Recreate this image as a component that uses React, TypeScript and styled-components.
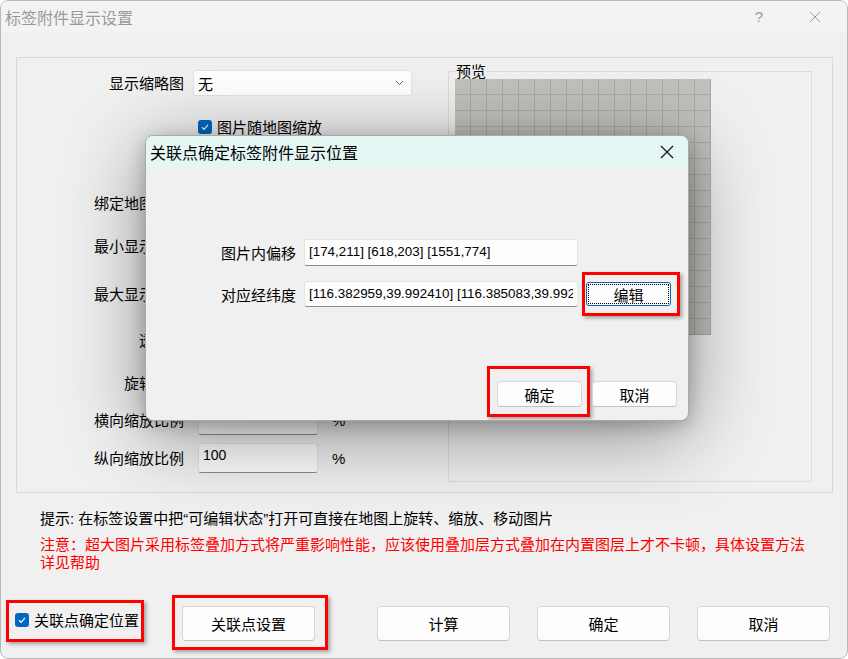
import React from 'react';
import styled, { createGlobalStyle } from 'styled-components';

const cjk = `'Noto Sans CJK SC', 'Noto Sans', sans-serif`;
const latin = `'Liberation Sans', 'Noto Sans CJK SC', sans-serif`;

const GlobalStyle = createGlobalStyle`
  html, body {
    margin: 0;
    padding: 0;
    background: #ffffff;
  }
  * {
    box-sizing: border-box;
  }
`;

const Window = styled.div`
  position: relative;
  width: 848px;
  height: 659px;
  display: flex;
  flex-direction: column;
  background: #f0f0f0;
  border: 1px solid #b9b9b9;
  border-radius: 8px;
  overflow: hidden;
  font-family: ${cjk};
  color: #000;
`;

const TitleBar = styled.div`
  height: 31px;
  display: flex;
  align-items: center;
  padding: 0 4px 0 4px;
  background: #f3f3f3;
`;

const Title = styled.div`
  flex: 1;
  font-size: 16px;
  color: #9a9a9a;
`;

const CaptionButton = styled.div`
  width: 56px;
  height: 31px;
  display: flex;
  align-items: center;
  justify-content: center;
  font-family: ${latin};
  font-size: 15px;
  color: #9a9a9a;
`;

const Frame = styled.div`
  margin: 25px 14px 0 15px;
  height: 436px;
  border: 1px solid #dadada;
  display: flex;
  padding: 4px 20px 10px 0;
`;

const FormColumn = styled.div`
  flex: 1;
  display: flex;
  flex-direction: column;
`;

const FormRow = styled.div<{ $gap: number }>`
  display: grid;
  grid-template-columns: 167px auto;
  column-gap: 9px;
  align-items: center;
  height: 30px;
  margin-top: ${p => p.$gap}px;
`;

const FieldLabel = styled.div`
  text-align: right;
  font-size: 15px;
  line-height: 20px;
  white-space: nowrap;
`;

const Controls = styled.div<{ $indent?: number }>`
  grid-column: 2;
  display: flex;
  align-items: center;
  padding-left: ${p => p.$indent ?? 0}px;
`;

const Combo = styled.div`
  width: 219px;
  height: 26px;
  display: flex;
  align-items: center;
  justify-content: space-between;
  padding: 0 7px 0 4px;
  background: #ffffff;
  border: 1px solid #e2e2e2;
  border-radius: 3px;
  font-size: 15px;
`;

const TextBox = styled.input<{ $w: number; $h: number; $size?: number; $lift?: number }>`
  width: ${p => p.$w}px;
  height: ${p => p.$h}px;
  margin: 0;
  padding: 0 4px ${p => p.$lift ?? 2}px;
  background: #fdfdfd;
  border: 1px solid #e4e4e4;
  border-bottom-color: #8c8c8c;
  border-radius: 3px;
  font-family: ${latin};
  font-size: ${p => p.$size ?? 14}px;
  color: #000;
  outline: none;
`;

const Unit = styled.span`
  margin-left: 14px;
  font-family: ${latin};
  font-size: 15px;
`;

const CheckItem = styled.label`
  display: inline-flex;
  align-items: center;
  gap: 5px;
  font-size: 15px;
  line-height: 20px;
  white-space: nowrap;
`;

const CheckBox = styled.span`
  width: 14px;
  height: 14px;
  display: inline-flex;
  align-items: center;
  justify-content: center;
  background: #0067c0;
  border-radius: 3px;
`;

const Preview = styled.fieldset`
  width: 364px;
  margin: 0;
  padding: 0 0 0 6px;
  border: 1px solid #dcdcdc;
  min-width: 0;
`;

const PreviewLegend = styled.legend`
  padding: 0 1px;
  font-size: 15px;
  line-height: 18px;
`;

const MapGrid = styled.div`
  width: 256px;
  height: 256px;
  margin-top: -1px;
  background-color: #c2c1bd;
  background-image: linear-gradient(to right, transparent 15px, #abaaa6 15px),
    linear-gradient(to bottom, transparent 15px, #abaaa6 15px);
  background-size: 16px 16px;
`;

const Notes = styled.div`
  margin-top: 17px;
  padding-left: 39px;
  font-size: 15px;
  line-height: 18px;
`;

const Hint = styled.div`
  font-family: ${latin};
`;

const Warning = styled.div`
  width: 772px;
  margin-top: 7px;
  color: #ff0000;
`;

const Footer = styled.div`
  margin-top: 35px;
  height: 35px;
  display: flex;
  align-items: center;
  padding: 0 17px 0 14px;
`;

const ButtonGroup = styled.div`
  margin-left: auto;
  display: flex;
  gap: 27px;
`;

const Button = styled.button<{ $w: number; $h: number; $focused?: boolean }>`
  position: relative;
  width: ${p => p.$w}px;
  height: ${p => p.$h}px;
  margin: 0;
  padding: 0;
  background: #fdfdfd;
  border: 1px solid ${p => (p.$focused ? '#0067c0' : '#d6d6d6')};
  border-bottom-color: ${p => (p.$focused ? '#0067c0' : '#c2c2c2')};
  border-radius: ${p => (p.$focused ? 3 : 4)}px;
  font-family: ${cjk};
  font-size: 15px;
  color: #000;
  &::before {
    content: '';
    display: ${p => (p.$focused ? 'block' : 'none')};
    position: absolute;
    inset: 1px;
    border: 1px dotted #000;
  }
`;

/* red annotation frame drawn around a control */
const Marked = styled.div<{ $inset: string; $lift?: number; $offset?: number }>`
  position: relative;
  display: inline-flex;
  margin-bottom: ${p => p.$lift ?? 0}px;
  margin-left: ${p => p.$offset ?? 0}px;
  &::after {
    content: '';
    position: absolute;
    inset: ${p => p.$inset};
    border: 3px solid #ff0000;
    box-shadow: 2px 2px 4px rgba(0, 0, 0, 0.35);
    pointer-events: none;
  }
`;

const Dialog = styled.div`
  position: absolute;
  left: 144px;
  top: 134px;
  width: 544px;
  height: 286px;
  display: flex;
  flex-direction: column;
  background: #f0f0f0;
  border: 1px solid #a9a9a9;
  border-radius: 8px;
  overflow: hidden;
  box-shadow: 0 14px 80px rgba(0, 0, 0, 0.42), 0 4px 18px rgba(0, 0, 0, 0.22);
`;

const DialogTitle = styled.div`
  height: 31px;
  flex-shrink: 0;
  display: flex;
  align-items: center;
  padding-left: 4px;
  background: #e5f7f4;
  font-size: 16px;
`;

const DialogClose = styled.div`
  width: 42px;
  height: 31px;
  margin-left: auto;
  display: flex;
  align-items: center;
  justify-content: center;
`;

const DialogBody = styled.div`
  flex: 1;
  display: flex;
  flex-direction: column;
  padding-top: 72px;
`;

const PairRow = styled.div<{ $h: number; $gap?: number }>`
  display: grid;
  grid-template-columns: 150px 274px 85px;
  column-gap: 8px;
  align-items: center;
  height: ${p => p.$h}px;
  margin-top: ${p => p.$gap ?? 0}px;
`;

const PairLabel = styled.div`
  text-align: right;
  font-size: 15px;
  white-space: nowrap;
`;

const DialogFooter = styled.div`
  margin-top: auto;
  display: flex;
  justify-content: flex-end;
  gap: 10px;
  padding: 0 11px 13px;
`;

const Tick = () => (
  <svg width="10" height="10" viewBox="0 0 10 10">
    <path d="M2 5.3 L4.1 7.3 L8 2.9" fill="none" stroke="#fff" strokeWidth="1.2" />
  </svg>
);

const Cross = ({ size, color, width }: { size: number; color: string; width: number }) => (
  <svg width={size} height={size} viewBox="0 0 14 14">
    <path d="M1 1 L13 13 M13 1 L1 13" stroke={color} strokeWidth={width} fill="none" />
  </svg>
);

const Chevron = () => (
  <svg width="9" height="6" viewBox="0 0 9 6">
    <path d="M1 1 L4.5 4.5 L8 1" fill="none" stroke="#555" strokeWidth="0.9" />
  </svg>
);

const hiddenRows = [
  { label: '绑定地图级别', gap: 46 },
  { label: '最小显示级别', gap: 13 },
  { label: '最大显示级别', gap: 18 },
  { label: '透明度', gap: 16 },
  { label: '旋转角度', gap: 13 },
];

export default function App() {
  return (
    <>
      <GlobalStyle />
      <Window>
        <TitleBar>
          <Title>标签附件显示设置</Title>
          <CaptionButton>?</CaptionButton>
          <CaptionButton>
            <Cross size={12} color="#8f8f8f" width={1} />
          </CaptionButton>
        </TitleBar>

        <Frame>
          <FormColumn>
            <FormRow $gap={6}>
              <FieldLabel>显示缩略图</FieldLabel>
              <Combo>
                <span>无</span>
                <Chevron />
              </Combo>
            </FormRow>
            <FormRow $gap={14}>
              <Controls $indent={5}>
                <CheckItem>
                  <CheckBox>
                    <Tick />
                  </CheckBox>
                  图片随地图缩放
                </CheckItem>
              </Controls>
            </FormRow>
            {hiddenRows.map(r => (
              <FormRow key={r.label} $gap={r.gap}>
                <FieldLabel>{r.label}</FieldLabel>
                <Controls $indent={5}>
                  <TextBox $w={120} $h={30} readOnly value="" />
                </Controls>
              </FormRow>
            ))}
            <FormRow $gap={7}>
              <FieldLabel>横向缩放比例</FieldLabel>
              <Controls $indent={5}>
                <TextBox $w={120} $h={30} $lift={14} readOnly value="100" />
                <Unit>%</Unit>
              </Controls>
            </FormRow>
            <FormRow $gap={8}>
              <FieldLabel>纵向缩放比例</FieldLabel>
              <Controls $indent={5}>
                <TextBox $w={120} $h={30} $lift={7} readOnly value="100" />
                <Unit>%</Unit>
              </Controls>
            </FormRow>
          </FormColumn>

          <Preview>
            <PreviewLegend>预览</PreviewLegend>
            <MapGrid />
          </Preview>
        </Frame>

        <Notes>
          <Hint>提示: 在标签设置中把“可编辑状态”打开可直接在地图上旋转、缩放、移动图片</Hint>
          <Warning>
            注意：超大图片采用标签叠加方式将严重影响性能，应该使用叠加层方式叠加在内置图层上才不卡顿，具体设置方法详见帮助
          </Warning>
        </Notes>

        <Footer>
          <Marked $inset="-10px -5px -12px -9px" $lift={7}>
            <CheckItem>
              <CheckBox>
                <Tick />
              </CheckBox>
              关联点确定位置
            </CheckItem>
          </Marked>
          <Marked $inset="-11px -13px -9px -10px" $offset={43}>
            <Button $w={133} $h={35}>关联点设置</Button>
          </Marked>
          <ButtonGroup>
            <Button $w={133} $h={35}>计算</Button>
            <Button $w={133} $h={35}>确定</Button>
            <Button $w={133} $h={35}>取消</Button>
          </ButtonGroup>
        </Footer>

        <Dialog>
          <DialogTitle>
            关联点确定标签附件显示位置
            <DialogClose>
              <Cross size={14} color="#1a1a1a" width={1.3} />
            </DialogClose>
          </DialogTitle>
          <DialogBody>
            <PairRow $h={27}>
              <PairLabel>图片内偏移</PairLabel>
              <TextBox $w={274} $h={27} $size={13.4} readOnly value="[174,211] [618,203] [1551,774]" />
            </PairRow>
            <PairRow $h={26} $gap={15}>
              <PairLabel>对应经纬度</PairLabel>
              <TextBox
                $w={274}
                $h={26}
                $size={13.4}
                readOnly
                value="[116.382959,39.992410] [116.385083,39.992427] [116.391207,39.988316]"
              />
              <Marked $inset="-10px -9px -10px -4px">
                <Button $w={85} $h={24} $focused>编辑</Button>
              </Marked>
            </PairRow>
            <DialogFooter>
              <Marked $inset="-15px -8px -10px -10px">
                <Button $w={85} $h={26}>确定</Button>
              </Marked>
              <Button $w={85} $h={26}>取消</Button>
            </DialogFooter>
          </DialogBody>
        </Dialog>
      </Window>
    </>
  );
}
